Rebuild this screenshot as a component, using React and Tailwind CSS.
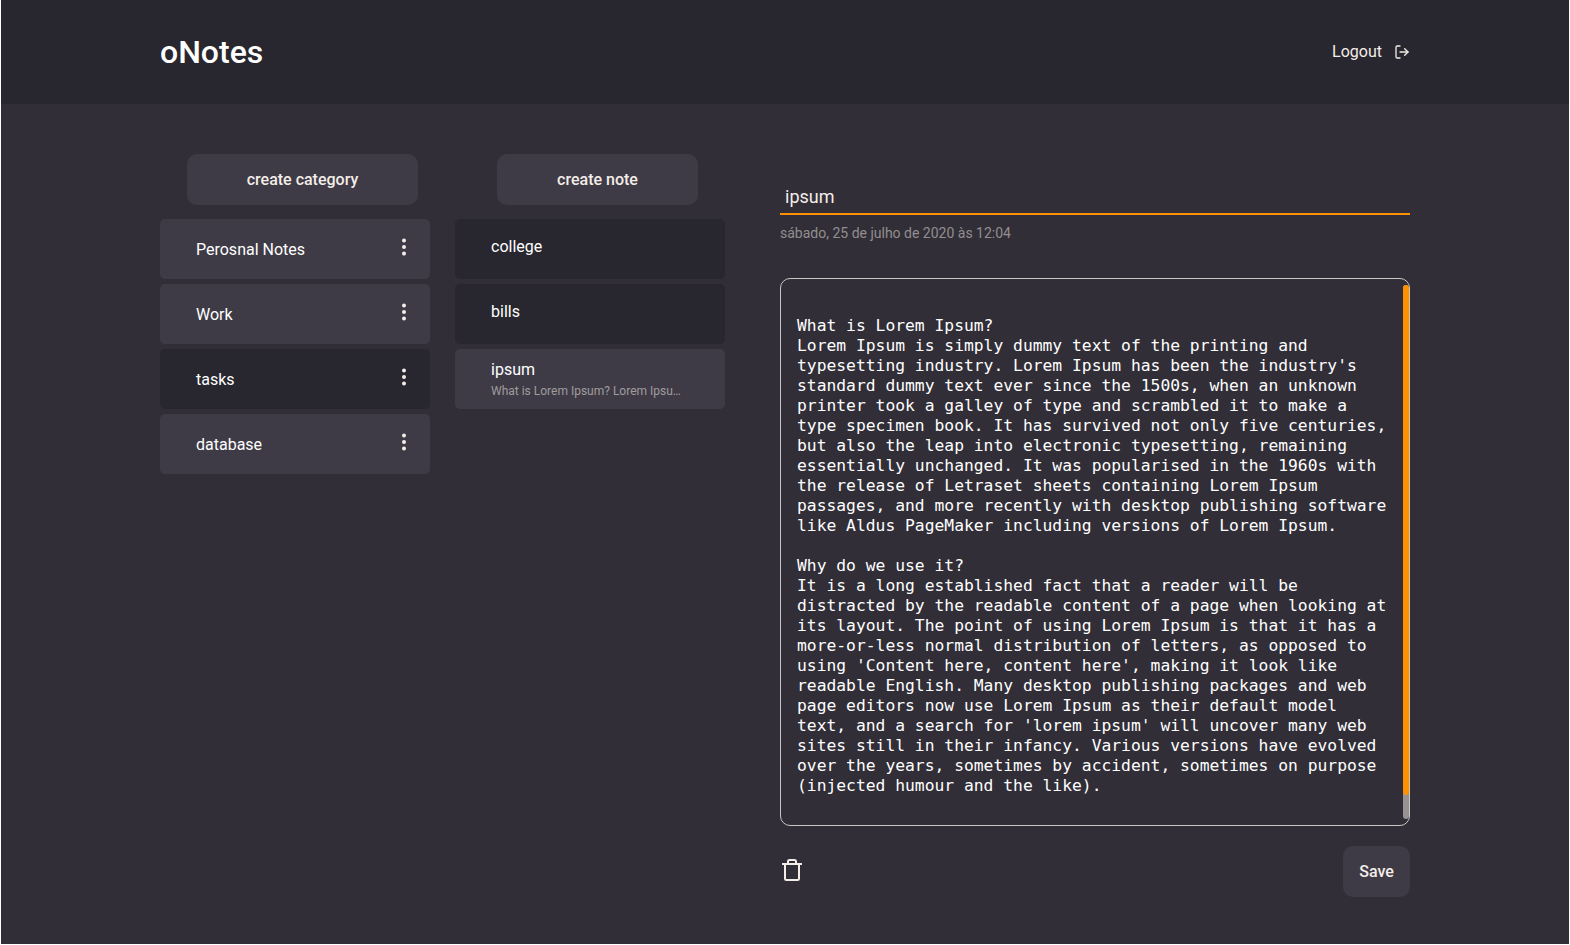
import { FiLogOut } from "react-icons/fi";

const categories = ["Perosnal Notes", "Work", "tasks", "database"];

const lines = [
  "What is Lorem Ipsum?",
  "Lorem Ipsum is simply dummy text of the printing and",
  "typesetting industry. Lorem Ipsum has been the industry's",
  "standard dummy text ever since the 1500s, when an unknown",
  "printer took a galley of type and scrambled it to make a",
  "type specimen book. It has survived not only five centuries,",
  "but also the leap into electronic typesetting, remaining",
  "essentially unchanged. It was popularised in the 1960s with",
  "the release of Letraset sheets containing Lorem Ipsum",
  "passages, and more recently with desktop publishing software",
  "like Aldus PageMaker including versions of Lorem Ipsum.",
  "",
  "Why do we use it?",
  "It is a long established fact that a reader will be",
  "distracted by the readable content of a page when looking at",
  "its layout. The point of using Lorem Ipsum is that it has a",
  "more-or-less normal distribution of letters, as opposed to",
  "using 'Content here, content here', making it look like",
  "readable English. Many desktop publishing packages and web",
  "page editors now use Lorem Ipsum as their default model",
  "text, and a search for 'lorem ipsum' will uncover many web",
  "sites still in their infancy. Various versions have evolved",
  "over the years, sometimes by accident, sometimes on purpose",
  "(injected humour and the like).",
];

function Dots() {
  return (
    <svg width="6" height="18" viewBox="0 0 6 18" fill="#f4ede8">
      <circle cx="3" cy="2.5" r="2" />
      <circle cx="3" cy="9" r="2" />
      <circle cx="3" cy="15.5" r="2" />
    </svg>
  );
}

function TrashIcon() {
  return (
    <svg width="20" height="22" viewBox="0 0 20 22" fill="none" stroke="#f4ede8" strokeWidth="2">
      <path d="M0 5H20" />
      <path d="M6 5V2.500Q6 1 7.500 1H12.500Q14 1 14 2.500V5" />
      <path d="M3 5V19.500Q3 21 4.500 21H15.500Q17 21 17 19.500V5" />
    </svg>
  );
}

export default function App() {
  return (
    <div className="h-[945px] w-full border-x border-b border-white bg-[#312e38] font-[Roboto,sans-serif] text-[#f4ede8]">
      <header className="flex h-[104px] items-center justify-between bg-[#28262e] px-[159px]">
        <h1 className="text-[32px] font-medium text-white">oNotes</h1>
        <a className="flex items-center gap-3 text-base">
          Logout
          <FiLogOut size={16} />
        </a>
      </header>
      <main className="flex pt-[50px] pl-[159px]">
        <section className="w-[270px]">
          <button className="ml-[27px] block h-[51px] w-[231px] rounded-[10px] bg-[#3e3b47] font-medium">create category</button>
          <ul className="mt-[14px] flex flex-col gap-[5px]">
            {categories.map((c) => (
              <li
                key={c}
                className={`flex h-[60px] items-center justify-between rounded-[5px] pr-[23px] pl-9 text-white ${c === "tasks" ? "bg-[#28262e]" : "bg-[#3e3b47]"}`}
              >
                <span className="pt-0.5">{c}</span>
                <span className="mb-1">
                  <Dots />
                </span>
              </li>
            ))}
          </ul>
        </section>
        <section className="ml-[25px] w-[270px]">
          <button className="ml-[42px] block h-[51px] w-[201px] rounded-[10px] bg-[#3e3b47] font-medium">create note</button>
          <ul className="mt-[14px] flex flex-col gap-[5px] text-white">
            <li className="h-[60px] rounded-[5px] bg-[#28262e] pt-4 pl-9">college</li>
            <li className="h-[60px] rounded-[5px] bg-[#28262e] pt-4 pl-9">bills</li>
            <li className="h-[60px] rounded-[5px] bg-[#3e3b47] pt-[9px] pl-9">
              <p>ipsum</p>
              <p className="w-[192px] text-xs leading-[18px] text-[#a09c9c]">What is Lorem Ipsum? Lorem Ipsu…</p>
            </li>
          </ul>
        </section>
        <section className="ml-[55px] w-[630px]">
          <div className="mt-[24px] flex h-[37px] items-center border-b-2 border-[#ff9000] pt-0.5 pl-[5px] text-lg">ipsum</div>
          <p className="mt-2 text-sm leading-5 text-[#928e8e]">sábado, 25 de julho de 2020 às 12:04</p>
          <div className="mt-[35px] flex h-[548px] justify-between rounded-[10px] border border-[#c9c6c6] pt-[37px] pl-4">
            <pre className="font-['DejaVu_Sans_Mono',monospace] text-[16.32px] leading-5 text-white">{lines.join("\n")}</pre>
            <div className="-mt-[31px] h-[534px] w-[6px] rounded-[3px] bg-[#999292]">
              <div className="h-[510px] rounded-[3px] bg-[#ff9000]" />
            </div>
          </div>
          <div className="mt-5 flex items-start justify-between">
            <span className="mt-[13px] ml-[2px]">
              <TrashIcon />
            </span>
            <button className="h-[51px] w-[67px] rounded-[10px] bg-[#3e3b47] font-medium">Save</button>
          </div>
        </section>
      </main>
    </div>
  );
}
